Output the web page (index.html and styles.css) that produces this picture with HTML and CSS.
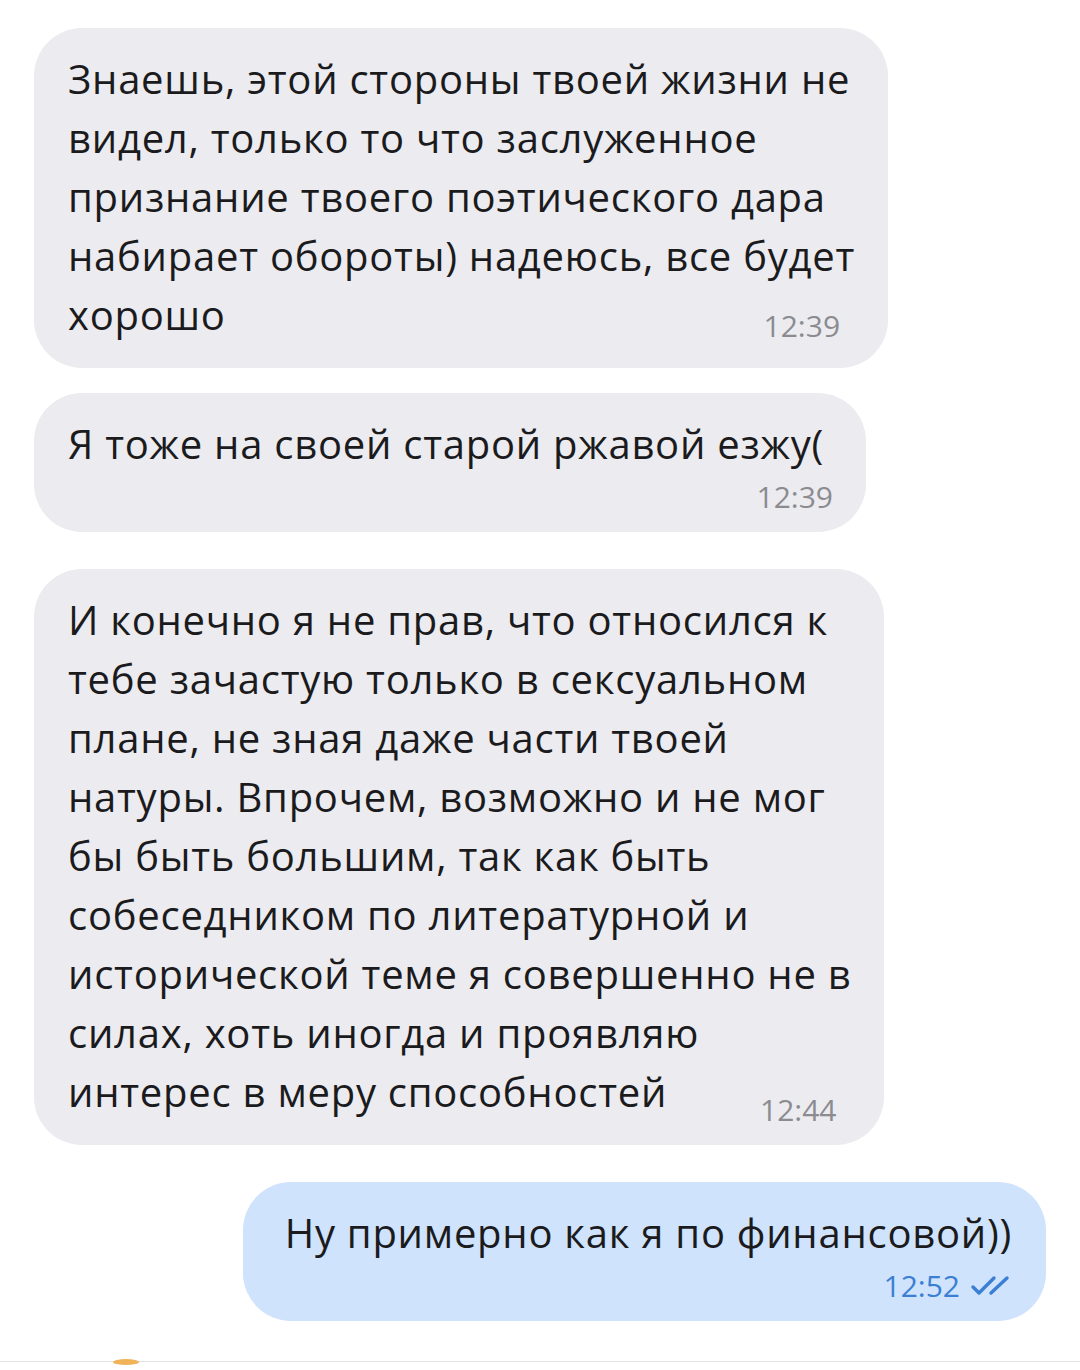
FILE: index.html
```html
<!DOCTYPE html>
<html lang="ru">
<head>
<meta charset="utf-8">
<link rel="stylesheet" href="styles.css">
</head>
<body>
<div class="chat">
  <div class="bubble in">
    <p class="text">Знаешь, этой стороны твоей жизни не<br>видел, только то что заслуженное<br>признание твоего поэтического дара<br>набирает обороты) надеюсь, все будет<br>хорошо</p>
    <div class="time inline raised">12:39</div>
  </div>
  <div class="bubble in tight">
    <p class="text">Я тоже на своей старой ржавой езжу(</p>
    <div class="time short">12:39</div>
  </div>
  <div class="bubble in group">
    <p class="text">И конечно я не прав, что относился к<br>тебе зачастую только в сексуальном<br>плане, не зная даже части твоей<br>натуры. Впрочем, возможно и не мог<br>бы быть большим, так как быть<br>собеседником по литературной и<br>исторической теме я совершенно не в<br>силах, хоть иногда и проявляю<br>интерес в меру способностей</p>
    <div class="time inline">12:44</div>
  </div>
  <div class="bubble out group">
    <p class="text">Ну примерно как я по финансовой))</p>
    <div class="time out-time">12:52
      <svg class="checks" width="42" height="22" viewBox="0 0 42 22"><path d="M3 12 L9 18 L24 3" fill="none" stroke="#3b7fd4" stroke-width="3.4" stroke-linecap="round" stroke-linejoin="round"/><path d="M21 18 L37 3" fill="none" stroke="#3b7fd4" stroke-width="3.4" stroke-linecap="round"/></svg>
    </div>
  </div>
</div>
<div class="bottom">
  <span class="dot"></span>
</div>
</body>
</html>
```
FILE: styles.css
```css
html, body {
  margin: 0;
  padding: 0;
  background: #ffffff;
}
body {
  width: 1080px;
  height: 1370px;
  overflow: hidden;
  font-family: "Open Sans", "Noto Sans", sans-serif;
  position: relative;
}
.chat {
  display: flex;
  flex-direction: column;
  padding: 28px 34px 0 34px;
}
.bubble {
  box-sizing: border-box;
  width: fit-content;
  border-radius: 48px;
  padding: 21px 33px 17px 34px;
}
.bubble.in {
  background: #ebebf0;
  align-self: flex-start;
}
.bubble.tight {
  margin-top: 25px;
  padding-right: 42px;
}
.bubble.group {
  margin-top: 37px;
}
.bubble.out {
  background: #cfe3fc;
  align-self: flex-end;
  padding-left: 42px;
  padding-right: 34px;
}
.text {
  margin: 0;
  font-size: 40px;
  letter-spacing: 0.75px;
  line-height: 59px;
  color: #1b1b1d;
  white-space: nowrap;
}
.time {
  font-size: 30px;
  line-height: 36px;
  color: #8b8b90;
  text-align: right;
  padding-right: 14px;
  margin-top: 6px;
}
.time.short {
  padding-right: 0;
  margin-right: -9px;
}
.time.inline {
  margin-top: -29px;
  padding-right: 15px;
}
.time.inline.raised {
  margin-top: -36px;
  padding-bottom: 7px;
}
.out-time {
  color: #3b7fd4;
  padding-right: 0;
  display: flex;
  justify-content: flex-end;
  align-items: center;
  gap: 10px;
}
.checks {
  display: block;
}
.bottom {
  position: absolute;
  left: 0;
  right: 0;
  top: 1361px;
  height: 9px;
  border-top: 1px solid #e2e2e4;
}
.dot {
  position: absolute;
  left: 113px;
  top: -3px;
  width: 26px;
  height: 6px;
  border-radius: 50%;
  background: #f1b35a;
}
```
